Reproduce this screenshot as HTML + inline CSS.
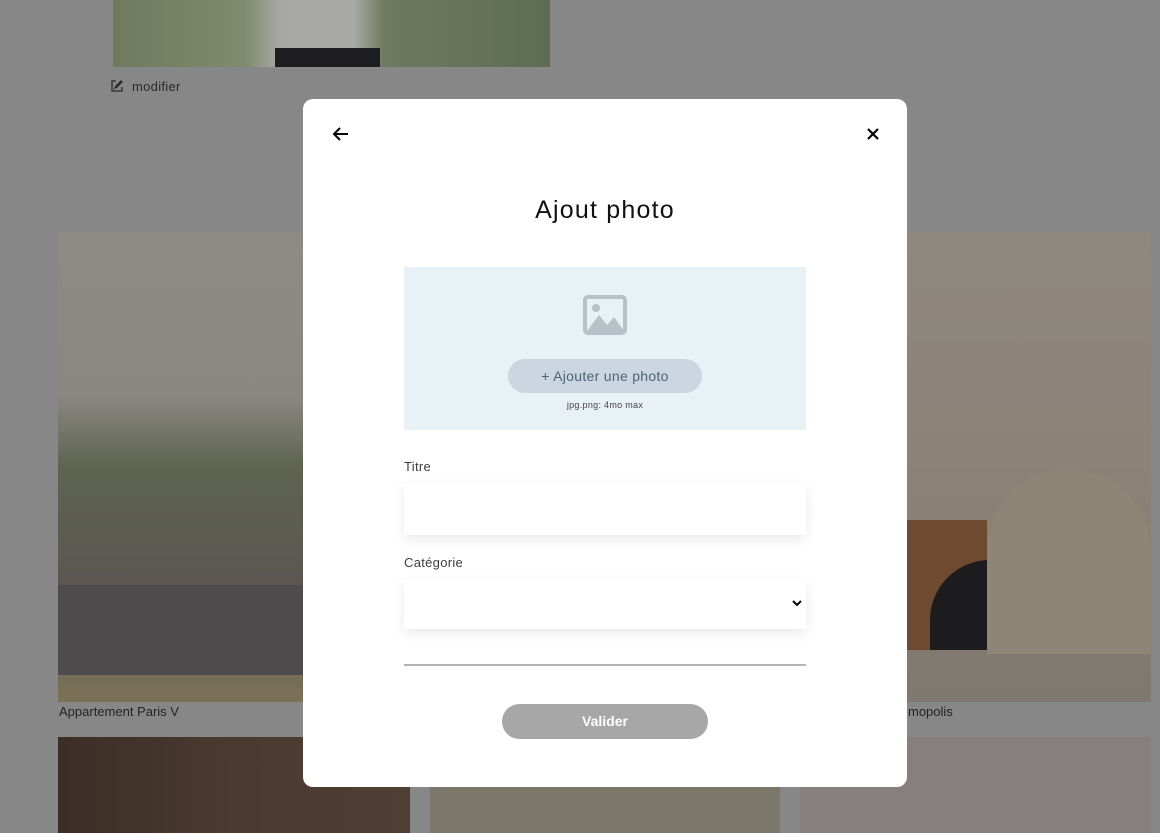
<!DOCTYPE html>
<html><head><meta charset="utf-8"><style>
*{box-sizing:border-box;margin:0;padding:0}
body{width:1160px;height:833px;overflow:hidden;background:#878787;position:relative;font-family:"Liberation Sans",sans-serif}
.a{position:absolute}
</style></head><body>
<div class="a" style="left:113px;top:0;width:437px;height:67px;background:linear-gradient(90deg,#6f7a5e 0%,#808a6c 30%,#a7a7a3 38%,#a9a9a7 55%,#6e7a60 62%,#5e6d52 100%)"></div>
<div class="a" style="left:275px;top:48px;width:105px;height:19px;background:#1e1e20"></div>
<svg class="a" style="left:110px;top:79px" width="14" height="14" viewBox="0 0 14 14"><path d="M6 2H2v10h10V8M7 8l-2 1 1-2 5-5 1 1z" fill="none" stroke="#2a2a2a" stroke-width="1.3"/></svg>
<div class="a" style="left:132px;top:79px;font-size:13px;color:#2a2a2a;letter-spacing:.3px">modifier</div>
<div class="a" style="left:58px;top:232px;width:352px;height:470px;background:linear-gradient(180deg,#8e8a86 0%,#8a8782 35%,#5e6450 50%,#5b5652 75%,#7b7256 100%)"></div>
<div class="a" style="left:58px;top:585px;width:250px;height:90px;background:#4e4b4c"></div>
<div class="a" style="left:907px;top:232px;width:244px;height:470px;background:linear-gradient(180deg,#8f887f,#8a8176 60%,#7f786e)"></div>
<div class="a" style="left:907px;top:520px;width:80px;height:130px;background:#6e4a30"></div>
<div class="a" style="left:930px;top:560px;width:60px;height:90px;background:#1c1c1e;border-radius:60px 0 0 0"></div>
<div class="a" style="left:987px;top:470px;width:164px;height:184px;background:#8e8576;border-radius:80px 80px 0 0"></div>
<div class="a" style="left:58px;top:702px;width:1093px;height:35px;background:#878787"></div>
<div class="a" style="left:59px;top:704px;font-size:13px;color:#232323">Appartement Paris V</div>
<div class="a" style="left:908px;top:704px;font-size:13px;color:#232323">mopolis</div>
<div class="a" style="left:58px;top:737px;width:352px;height:96px;background:linear-gradient(90deg,#3c2e26,#4a3a30 50%,#4f3e33)"></div>
<div class="a" style="left:430px;top:737px;width:350px;height:96px;background:#7b776a"></div>
<div class="a" style="left:800px;top:737px;width:351px;height:96px;background:#867f7d"></div>
<div class="a" style="left:303px;top:99px;width:604px;height:688px;background:#fff;border-radius:10px">
<svg class="a" style="left:29px;top:27px" width="18" height="16" viewBox="0 0 18 16"><path d="M16 8H3M8 2L2 8l6 6" fill="none" stroke="#000" stroke-width="2"/></svg>
<svg class="a" style="left:563px;top:28px" width="14" height="14" viewBox="0 0 14 14"><path d="M2 2l10 10M12 2L2 12" stroke="#000" stroke-width="2.2"/></svg>
<div class="a" style="left:0;width:604px;top:97px;text-align:center;font-size:25px;color:#111;letter-spacing:1.2px">Ajout photo</div>
<div class="a" style="left:101px;top:168px;width:402px;height:163px;background:#e8f1f6">
<svg class="a" style="left:179px;top:28px" width="45" height="42" viewBox="0 0 45 42"><rect x="2" y="2" width="40" height="36" rx="3" fill="none" stroke="#b9c1c8" stroke-width="4"/><circle cx="13" cy="13" r="4" fill="#b9c1c8"/><path d="M4 36l12-16 8 10 7-8 10 14z" fill="#b9c1c8"/></svg>
<div class="a" style="left:104px;top:92px;width:194px;height:34px;border-radius:17px;background:#cbd6e0;text-align:center;line-height:34px;font-size:14px;color:#4a6678;letter-spacing:.3px">+ Ajouter une photo</div>
<div class="a" style="left:0;width:402px;top:133px;text-align:center;font-size:9px;color:#444;letter-spacing:.3px">jpg.png: 4mo max</div>
</div>
<div class="a" style="left:101px;top:360px;font-size:13px;color:#3d3d3d;letter-spacing:.3px">Titre</div>
<div class="a" style="left:101px;top:385px;width:402px;height:51px;background:#fff;box-shadow:0 4px 12px rgba(0,0,0,.09)"></div>
<div class="a" style="left:101px;top:456px;font-size:13px;color:#3d3d3d;letter-spacing:.3px">Catégorie</div>
<div class="a" style="left:101px;top:481px;width:402px;height:49px;background:#fff;box-shadow:0 4px 12px rgba(0,0,0,.09)"></div>
<svg class="a" style="left:489px;top:500px" width="10" height="8" viewBox="0 0 10 8"><path d="M1 2l4 4 4-4" fill="none" stroke="#000" stroke-width="2"/></svg>
<div class="a" style="left:101px;top:565px;width:402px;height:2px;background:#b3b3b3"></div>
<div class="a" style="left:199px;top:605px;width:206px;height:35px;border-radius:18px;background:#a7a7a7;text-align:center;line-height:35px;font-size:14px;font-weight:bold;color:#fff">Valider</div>
</div>
</body></html>
